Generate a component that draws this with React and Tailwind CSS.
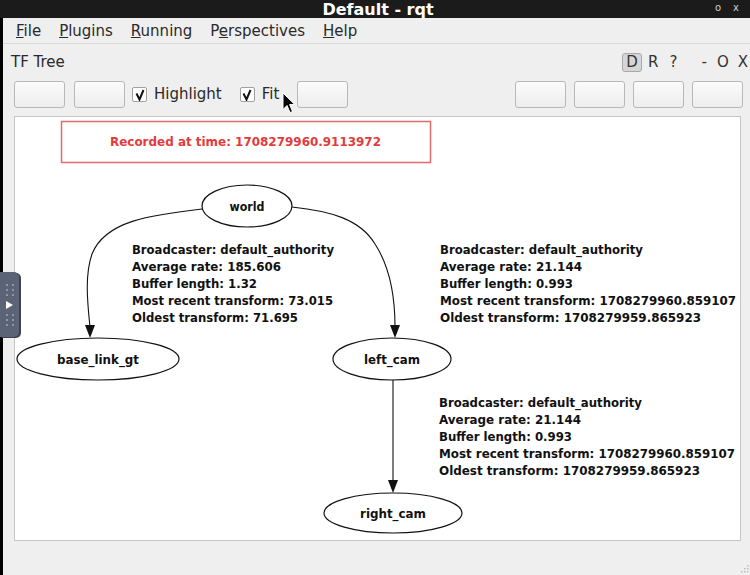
import React from 'react';

const ToolButton = () => (
  <div className="w-[51px] h-[27px] rounded-[3px] border border-[#b8b8b8] bg-linear-to-b from-[#fbfbfb] to-[#ededed]" />
);

const CheckBox = ({ label }) => (
  <div className="flex items-center gap-[7px]">
    <span className="w-[15px] h-[15px] border border-[#a0a0a0] bg-white rounded-[2px] flex items-center justify-center">
      <svg width="10" height="12" viewBox="0 0 10 12">
        <path d="M1.5 4.5 L4.5 10.5 L8.5 1" fill="none" stroke="#111" strokeWidth="2" />
      </svg>
    </span>
    <span>{label}</span>
  </div>
);

// graphviz text is narrower than DejaVu Sans Bold, squeeze it
const SQ = 0.91;

// edge label blocks: [text, width measured from the reference]
const leftLabel = [
  ['Broadcaster: default_authority', 202],
  ['Average rate: 185.606', 149],
  ['Buffer length: 1.32', 125],
  ['Most recent transform: 73.015', 201],
  ['Oldest transform: 71.695', 166],
];

const camLabel = [
  ['Broadcaster: default_authority', 203],
  ['Average rate: 21.144', 142],
  ['Buffer length: 0.993', 133],
  ['Most recent transform: 1708279960.859107', 296],
  ['Oldest transform: 1708279959.865923', 261],
];

const GText = ({ x, y, w, anchor = 'start', fill = '#111', children }) => (
  <text
    transform={`translate(${x} ${y}) scale(${SQ} 1)`}
    textAnchor={anchor}
    fill={fill}
    textLength={w / SQ}
    lengthAdjust="spacingAndGlyphs"
  >
    {children}
  </text>
);

const Label = ({ x, y, lines }) => (
  <>
    {lines.map(([t, w], i) => (
      <GText key={i} x={x} y={y + i * 17} w={w}>
        {t}
      </GText>
    ))}
  </>
);

const Node = ({ cx, cy, rx, ry, label, w }) => (
  <>
    <ellipse cx={cx} cy={cy} rx={rx} ry={ry} fill="white" stroke="#111" strokeWidth="1.2" />
    <GText x={cx} y={cy + 5} w={w} anchor="middle">
      {label}
    </GText>
  </>
);

const TfGraph = () => (
  <svg width="725" height="423" className="block font-['DejaVu_Sans',sans-serif] font-bold text-[13px]">
    <g transform="translate(-15 -118)">
      <rect x="61.5" y="122.5" width="369" height="41" fill="white" stroke="#e06a6a" strokeWidth="1.5" />
      <GText x={245.5} y={147} w={271} anchor="middle" fill="#e33b3b">
        Recorded at time: 1708279960.9113972
      </GText>

      {/* edges */}
      <path d="M202 210 C150 216 105 222 92 255 C85 275 87 300 90 328" fill="none" stroke="#111" strokeWidth="1.1" />
      <polygon points="85,326 95,326 90,339" fill="#111" />
      <path d="M292 208 C330 212 360 220 375 245 C390 268 395 300 395 328" fill="none" stroke="#111" strokeWidth="1.1" />
      <polygon points="390,326 400,326 395,339" fill="#111" />
      <path d="M393 381 L393 483" fill="none" stroke="#111" strokeWidth="1.1" />
      <polygon points="388,481 398,481 393,494" fill="#111" />

      <Node cx={247} cy={207} rx={45} ry={21} label="world" w={35} />
      <Node cx={98} cy={360} rx={81} ry={21} label="base_link_gt" w={82} />
      <Node cx={392} cy={360} rx={59} ry={21} label="left_cam" w={56} />
      <Node cx={393} cy={514} rx={69} ry={20} label="right_cam" w={66} />

      <Label x={132} y={255} lines={leftLabel} />
      <Label x={440} y={255} lines={camLabel} />
      <Label x={439} y={408} lines={camLabel} />
    </g>
  </svg>
);

export default function App() {
  return (
    <div className="relative w-[750px] h-[575px] overflow-hidden bg-[#efefef] text-[#2a2a2a] font-['DejaVu_Sans',sans-serif] text-[15px] flex flex-col">
      {/* title bar */}
      <div className="h-[18px] bg-[#1b1b1b] flex items-start relative shrink-0">
        <div className="flex-1 text-center text-white font-bold text-[16px] leading-[19px] -mb-[1px] pl-[6px]">Default - rqt</div>
        <div className="absolute right-[11px] top-[3px] flex gap-[12px] text-[#cfcfcf] text-[10px] leading-none">
          <span>o</span>
          <span>x</span>
        </div>
      </div>

      <div className="flex-1 flex">
        <div className="w-[3px] bg-black shrink-0" />
        <div className="flex-1 flex flex-col">
          {/* menu */}
          <div className="h-[26px] flex items-center gap-[18px] pl-[13px] pt-[2px] border-b border-[#d8d8d8]">
            <span><span className="underline">F</span>ile</span>
            <span><span className="underline">P</span>lugins</span>
            <span><span className="underline">R</span>unning</span>
            <span>P<span className="underline">e</span>rspectives</span>
            <span><span className="underline">H</span>elp</span>
          </div>

          {/* plugin header */}
          <div className="h-[34px] flex items-center pl-[8px] pr-[2px] pt-[2px]">
            <span>TF Tree</span>
            <div className="ml-auto flex items-center text-[#333]">
              <span className="w-[20px] h-[19px] flex items-center justify-center rounded-[3px] border border-[#a9a9a9] bg-[#d6d6d6]">D</span>
              <span className="ml-[6px]">R</span>
              <span className="ml-[11px]">?</span>
              <span className="ml-[24px]">-</span>
              <span className="ml-[10px]">O</span>
              <span className="ml-[9px]">X</span>
            </div>
          </div>

          {/* toolbar */}
          <div className="flex items-center pl-[11px] pr-[7px] pt-[3px]">
            <ToolButton />
            <div className="ml-[9px]"><ToolButton /></div>
            <div className="ml-[7px]"><CheckBox label="Highlight" /></div>
            <div className="ml-[18px]"><CheckBox label="Fit" /></div>
            <div className="ml-[18px]"><ToolButton /></div>
            <div className="ml-auto flex gap-[8px]">
              <ToolButton />
              <ToolButton />
              <ToolButton />
              <ToolButton />
            </div>
          </div>

          {/* graph view */}
          <div className="mt-[8px] ml-[11px] w-[727px] h-[425px] border border-[#c6c6c6] bg-white overflow-hidden">
            <TfGraph />
          </div>
        </div>
      </div>

      {/* mouse cursor */}
      <svg className="absolute left-[282px] top-[92px]" width="14" height="22" viewBox="0 0 14 22">
        <path d="M1 1 L1 17.5 L5 13.5 L8 20.5 L10.5 19.5 L7.6 12.6 L12.8 12.6 Z" fill="#000" stroke="#fff" strokeWidth="1" />
      </svg>

      {/* resize grip */}
      <svg className="absolute right-[1px] bottom-[2px]" width="8" height="8" viewBox="0 0 8 8">
        <rect x="6" y="0" width="1.5" height="1.5" fill="#bdbdbd" />
        <rect x="3" y="3" width="1.5" height="1.5" fill="#bdbdbd" />
        <rect x="6" y="3" width="1.5" height="1.5" fill="#bdbdbd" />
        <rect x="0" y="6" width="1.5" height="1.5" fill="#bdbdbd" />
        <rect x="3" y="6" width="1.5" height="1.5" fill="#bdbdbd" />
        <rect x="6" y="6" width="1.5" height="1.5" fill="#bdbdbd" />
      </svg>

      {/* side handle overlay */}
      <div className="absolute left-0 top-[272px] w-[19px] h-[65px] rounded-r-[5px] bg-[#5b6477] shadow-[2px_1px_0_#3f434b] flex flex-col items-center justify-center gap-[5px]">
        <div className="grid grid-cols-2 gap-x-[4px] gap-y-[3px]">
          {[0, 1, 2, 3, 4, 5].map((i) => (
            <span key={i} className="w-[2px] h-[2px] bg-[#8d96aa]" />
          ))}
        </div>
        <svg width="7" height="8" viewBox="0 0 7 8">
          <path d="M0 0 L7 4 L0 8 Z" fill="#fff" />
        </svg>
        <div className="grid grid-cols-2 gap-x-[4px] gap-y-[3px]">
          {[0, 1, 2, 3, 4, 5].map((i) => (
            <span key={i} className="w-[2px] h-[2px] bg-[#8d96aa]" />
          ))}
        </div>
      </div>
    </div>
  );
}
